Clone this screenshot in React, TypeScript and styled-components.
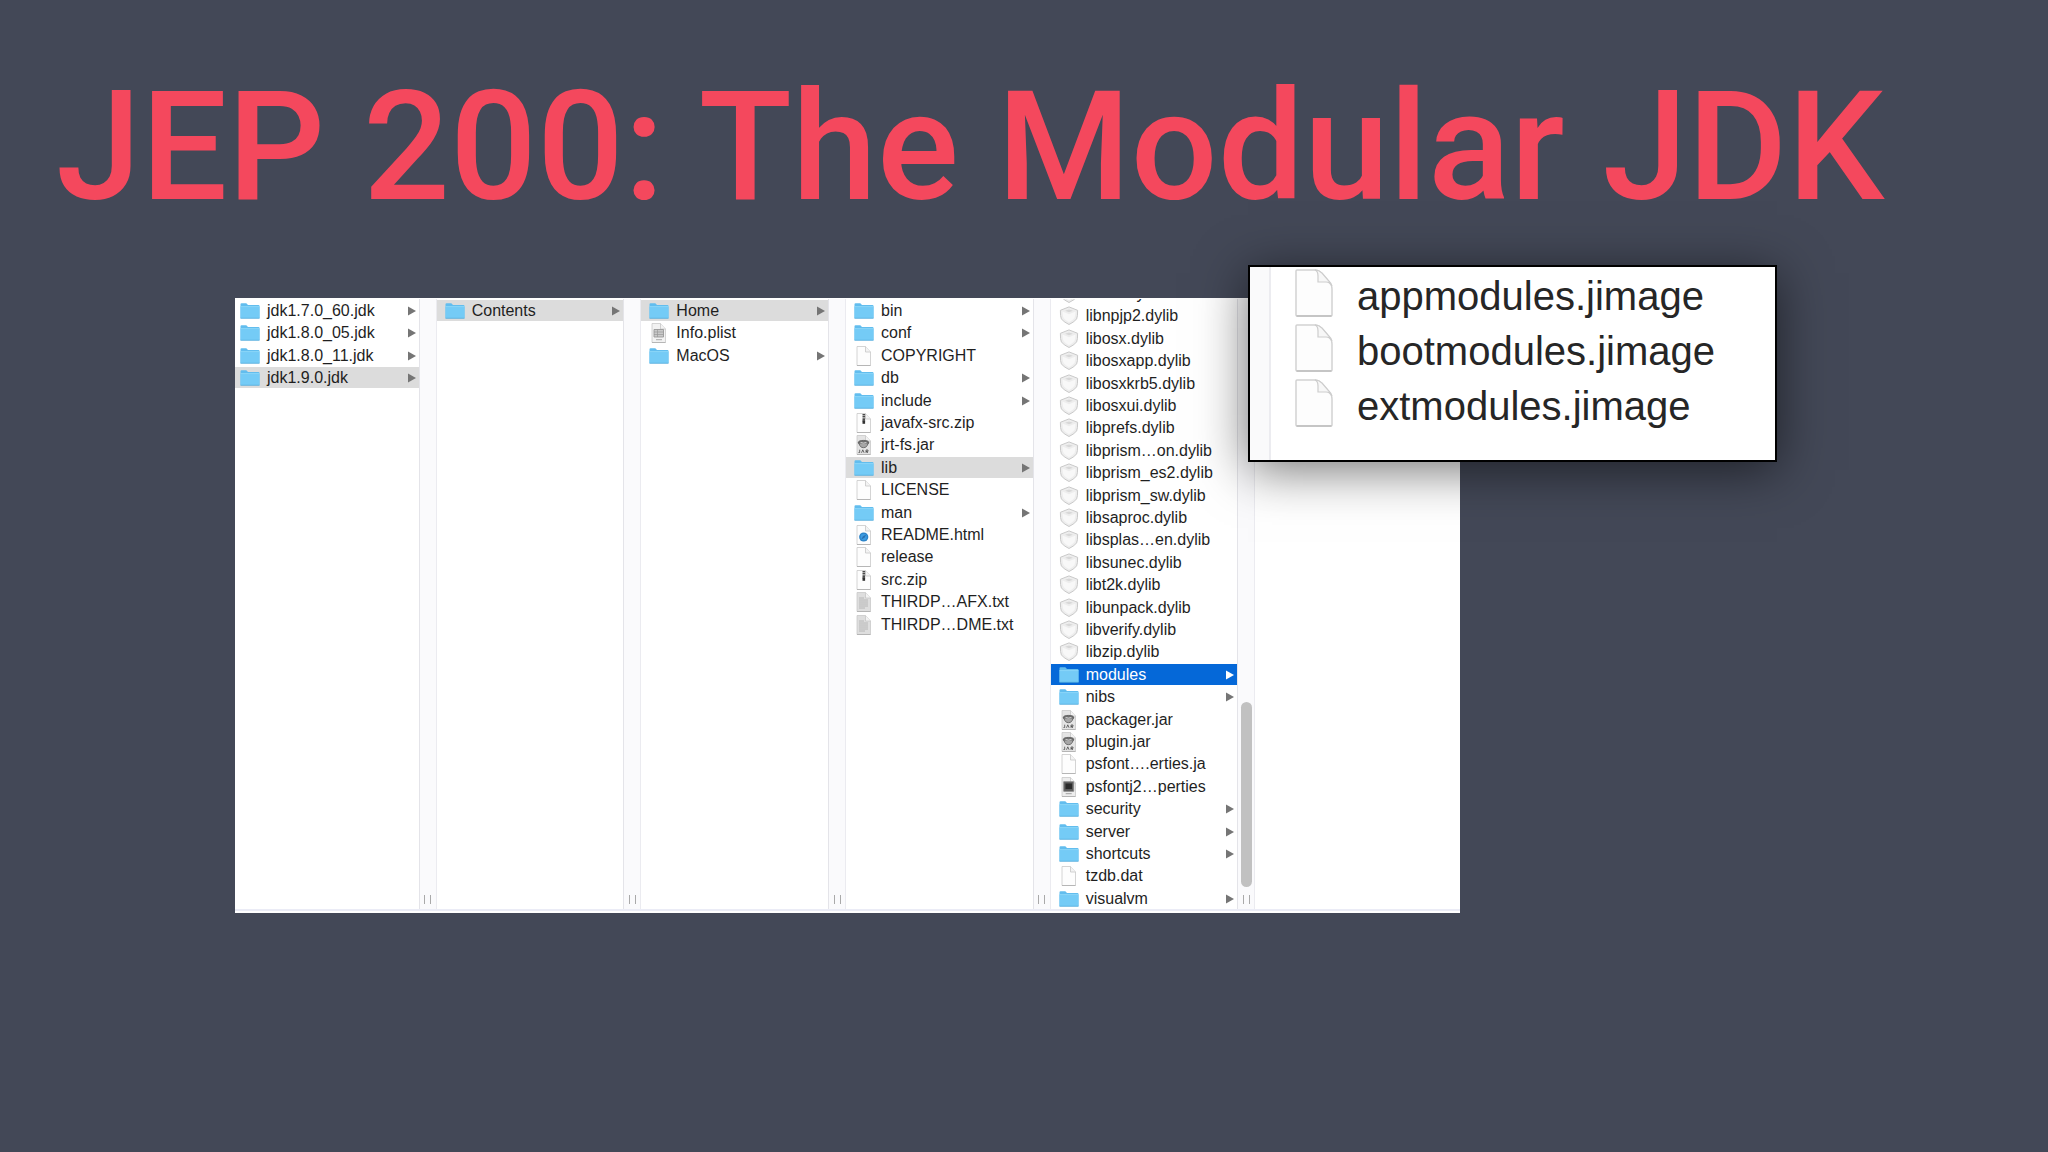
import React from "react";
import styled, { createGlobalStyle, css } from "styled-components";

type Kind = "folder" | "doc" | "plist" | "zip" | "jar" | "html" | "txt" | "lib" | "exec";
type Tone = "plain" | "path" | "active";
interface Entry {
  name: string;
  kind: Kind;
  tone?: Tone;
}

const GlobalStyle = createGlobalStyle`
  * { box-sizing: border-box; }
  body { margin: 0; background: #434857; }
`;

const sans = `"Liberation Sans", Arial, Helvetica, sans-serif`;

const Slide = styled.main`
  min-height: 100vh;
  padding: 52px 56px 64px;
  overflow: hidden;
  background: #434857;
  font-family: ${sans};
`;

const Title = styled.h1`
  margin: 0;
  color: #f4485d;
  font-family: Roboto, ${sans};
  font-size: 153px;
  font-weight: 500;
  line-height: 190px;
  white-space: nowrap;
`;

const Stage = styled.section`
  position: relative;
  max-width: 1404px;
  margin-top: 56px;
  padding-left: 179px;
`;

const Browser = styled.div`
  background: #ffffff;
  padding: 1px 0 2px;
`;

const Columns = styled.div`
  display: flex;
  height: 612px;
  border-bottom: 2px solid #ebecf6;
`;

const List = styled.ul<{ $grow: number; $inset: number; $scrolled?: boolean }>`
  flex: ${(p) => p.$grow} 1 0;
  min-width: 0;
  margin: 0;
  padding: 1px 0 0;
  list-style: none;
  display: flex;
  flex-direction: column;
  justify-content: ${(p) => (p.$scrolled ? "flex-end" : "flex-start")};
  overflow: hidden;
  --inset: ${(p) => p.$inset}px;
`;

const Item = styled.li`
  flex: none;
  height: 21px;
  margin-bottom: 1px;
  &:nth-child(5n + 2),
  &:nth-child(5n + 4) {
    margin-bottom: 2px;
  }
  &:last-child {
    margin-bottom: 0;
  }
`;

const tones = {
  plain: css`
    background: transparent;
    color: #1f1f1f;
  `,
  path: css`
    background: #dcdcdc;
    color: #1f1f1f;
  `,
  active: css`
    background: #0568d8;
    color: #ffffff;
  `,
};

const RowButton = styled.button<{ $tone: Tone }>`
  display: flex;
  align-items: center;
  gap: 7px;
  width: 100%;
  height: 21px;
  padding: 0 3px 0 var(--inset);
  border: 0;
  font: 16px/21px ${sans};
  text-align: left;
  white-space: nowrap;
  ${(p) => tones[p.$tone]}
`;

const Name = styled.span`
  flex: 1;
`;

const IconSvg = styled.svg`
  display: block;
  flex: none;
`;

const Divider = styled.div`
  flex: none;
  width: 18px;
  display: flex;
  flex-direction: column;
  justify-content: flex-end;
  align-items: center;
  gap: 8px;
  padding-bottom: 5px;
  background: #fafafc;
  border-left: 1px solid #e4e4e9;
  border-right: 1px solid #ebebf0;
`;

const Thumb = styled.div`
  width: 11px;
  height: 185px;
  border-radius: 6px;
  background: #c1c1c1;
`;

const Grip = styled.div`
  width: 7px;
  height: 9px;
  border: solid #a9a9a9;
  border-width: 0 1px;
`;

const Preview = styled.div`
  flex: 205 1 0;
`;

const Callout = styled.aside`
  position: absolute;
  top: -33px;
  left: 1192px;
  width: 529px;
  height: 197px;
  display: flex;
  border: 2px solid #000000;
  background: #ffffff;
  box-shadow: 0 8px 48px rgba(0, 0, 0, 0.55);
`;

const Gutter = styled.div`
  width: 21px;
  background: #fafafb;
  border-right: 2px solid #ececf0;
`;

const BigList = styled.ul`
  margin: 0;
  padding: 2px 0 0 24px;
  list-style: none;
  display: flex;
  flex-direction: column;
  gap: 5px;
`;

const BigRow = styled.li`
  display: flex;
  gap: 24px;
  height: 50px;
  color: #262626;
  font-size: 40px;
  line-height: 54px;
  white-space: nowrap;
`;

const Page = ({ fill = "#fdfdfd" }: { fill?: string }) => (
  <>
    <path d="M3 .5h8.500l5 5.500v13.500H3z" fill={fill} stroke="#c9c9c9" strokeWidth=".8" />
    <path d="M11.500.5v5.500h5" fill="#f3f3f3" stroke="#c6c6c6" strokeWidth=".8" />
    <path d="M3 19.600h13.500" stroke="#a9a9a9" strokeWidth=".8" />
  </>
);

const glyphs: Record<Kind, React.ReactNode> = {
  folder: (
    <>
      <path d="M.5 3.200q0-1 1-1h4.800l1.700 1.700h10.500q1 0 1 1v12.200H.5z" fill="#62bdee" />
      <path d="M.5 5.600h19v11.600H.5z" fill="#74cbf6" />
      <path d="M.5 5.600h19" stroke="#93daf9" strokeWidth=".8" />
      <path d="M.5 17.300h19" stroke="#4fa9da" strokeWidth=".8" />
    </>
  ),
  doc: <Page />,
  plist: (
    <>
      <Page fill="#f2f2f2" />
      <path d="M5 6.500h9.500v7.500H5z" fill="#c9c9c9" stroke="#989898" strokeWidth=".9" />
      <path d="M5 9h9.500M5 11.500h9.500M8.500 6.500v7.500" stroke="#989898" strokeWidth=".7" />
      <path d="M7 16.700h6" stroke="#aaaaaa" strokeWidth="1" />
    </>
  ),
  zip: (
    <>
      <Page />
      <path d="M9.800 1v7.500" stroke="#4a4a4a" strokeWidth="2.600" strokeDasharray="1.300 .4" />
      <path d="M8.500 7.500h2.600v3.300H8.500z" fill="#303030" />
    </>
  ),
  jar: (
    <>
      <Page fill="#e4e4e4" />
      <ellipse cx="9.500" cy="7.600" rx="5.200" ry="2.200" fill="#6e6e6e" stroke="#444444" strokeWidth=".7" />
      <path d="M5 8.500q1 4.200 4.500 4.200t4.500-4.200" fill="#a6a6a6" stroke="#5a5a5a" strokeWidth=".8" />
      <path d="M6.500 7.400q3 1.300 6 0" stroke="#e9e9e9" strokeWidth=".8" fill="none" />
      <path d="M5.700 14.700v2.800H4.500M7.500 17.800l1.300-3 1.300 3M12 17.800v-2.800h2v1.400h-2l2 1.400" stroke="#4d4d4d" strokeWidth=".8" fill="none" />
    </>
  ),
  html: (
    <>
      <Page />
      <circle cx="9.700" cy="12" r="4.600" fill="#2b83c8" />
      <circle cx="9.700" cy="12" r="3.200" fill="#3d9be0" />
      <path d="M12.300 9.500l-1.800 3.300-3.300 1.700 1.800-3.300z" fill="#2a6fb0" />
    </>
  ),
  txt: (
    <>
      <Page fill="#dedede" />
      <path d="M5 6h5M5 8h9M5 10h9M5 12h9M5 14h9M5 16h6" stroke="#adadad" strokeWidth=".8" />
    </>
  ),
  lib: (
    <>
      <path
        d="M10 .9l8.600 3.400q.2 6.200-1 8.600Q15.500 16 10 18.500 4.500 16 2.400 12.900 1.200 10.500 1.400 4.300z"
        fill="#ededed"
        stroke="#c9c9c9"
        strokeWidth="1"
      />
      <path d="M3.500 5.600l6.500 2.600 6.500-2.600q0 4.500-1 6.300Q13.500 14.500 10 16.300q-3.500-1.800-5.500-4.400Q3.500 10 3.500 5.600z" fill="#f8f8f8" />
      <path d="M6 4.800L10 3.600l4 1.200-4 1.500z" fill="#d8d8d8" />
    </>
  ),
  exec: (
    <>
      <Page fill="#ededed" />
      <path d="M4.700 4.700h10v9.600h-10z" fill="#5c5c5c" stroke="#858585" strokeWidth=".8" />
      <path d="M6.500 6.500h6.500V12H6.500z" fill="#2b2b2b" />
      <path d="M6.700 16.700h6" stroke="#999999" strokeWidth=".9" />
    </>
  ),
};

const Icon = ({ kind }: { kind: Kind }) => (
  <IconSvg width="20" height="20" viewBox="0 0 20 20" fill="none" aria-hidden="true">
    {glyphs[kind]}
  </IconSvg>
);

const Arrow = ({ light }: { light: boolean }) => (
  <IconSvg width="8" height="10" viewBox="0 0 8 10" aria-hidden="true">
    <path d="M0 .5v9L8 5z" fill={light ? "#ffffff" : "#757575"} />
  </IconSvg>
);

const BigPage = () => (
  <IconSvg width="38" height="48" viewBox="0 0 38 48" fill="none" aria-hidden="true">
    <path d="M1 2q0-1 1-1h18q4 0 7 4l7 8q3 3 3 7v26q0 1-1 1H2q-1 0-1-1z" fill="#fdfdfd" stroke="#d2d2d2" strokeWidth="1.500" />
    <path d="M20 1q3 1 3 6v6h8q4 0 6 4-1-3-4-6l-6-7q-3-3-7-3z" fill="#f7f7f7" stroke="#cdcdcd" strokeWidth="1.200" />
    <path d="M1.500 47h35" stroke="#bdbdbd" strokeWidth="1.500" />
  </IconSvg>
);

const f = (name: string, tone: Tone = "plain"): Entry => ({ name, kind: "folder", tone });
const e = (name: string, kind: Kind): Entry => ({ name, kind });

const jdks = [f("jdk1.7.0_60.jdk"), f("jdk1.8.0_05.jdk"), f("jdk1.8.0_11.jdk"), f("jdk1.9.0.jdk", "path")];
const bundle = [f("Contents", "path")];
const contents = [f("Home", "path"), e("Info.plist", "plist"), f("MacOS")];
const home = [
  f("bin"),
  f("conf"),
  e("COPYRIGHT", "doc"),
  f("db"),
  f("include"),
  e("javafx-src.zip", "zip"),
  e("jrt-fs.jar", "jar"),
  f("lib", "path"),
  e("LICENSE", "doc"),
  f("man"),
  e("README.html", "html"),
  e("release", "doc"),
  e("src.zip", "zip"),
  e("THIRDP…AFX.txt", "txt"),
  e("THIRDP…DME.txt", "txt"),
];
const lib = [
  ...[
    "libnio",
    "libnpjp2",
    "libosx",
    "libosxapp",
    "libosxkrb5",
    "libosxui",
    "libprefs",
    "libprism…on",
    "libprism_es2",
    "libprism_sw",
    "libsaproc",
    "libsplas…en",
    "libsunec",
    "libt2k",
    "libunpack",
    "libverify",
    "libzip",
  ].map((n) => e(`${n}.dylib`, "lib")),
  f("modules", "active"),
  f("nibs"),
  e("packager.jar", "jar"),
  e("plugin.jar", "jar"),
  e("psfont….erties.ja", "doc"),
  e("psfontj2…perties", "exec"),
  f("security"),
  f("server"),
  f("shortcuts"),
  e("tzdb.dat", "doc"),
  f("visualvm"),
];

interface ColumnProps {
  items: Entry[];
  grow?: number;
  inset?: number;
  scrolled?: boolean;
}

const Column = ({ items, grow = 187, inset = 8, scrolled }: ColumnProps) => (
  <>
    <List $grow={grow} $inset={inset} $scrolled={scrolled}>
      {items.map(({ name, kind, tone = "plain" }) => (
        <Item key={name}>
          <RowButton type="button" $tone={tone}>
            <Icon kind={kind} />
            <Name>{name}</Name>
            {kind === "folder" && <Arrow light={tone === "active"} />}
          </RowButton>
        </Item>
      ))}
    </List>
    <Divider>
      {scrolled && <Thumb />}
      <Grip />
    </Divider>
  </>
);

export default function App() {
  return (
    <>
      <GlobalStyle />
      <Slide>
        <Title>JEP 200: The Modular JDK</Title>
        <Stage>
          <Browser>
            <Columns>
              <Column items={jdks} grow={184} inset={5} />
              <Column items={bundle} />
              <Column items={contents} />
              <Column items={home} />
              <Column items={lib} scrolled />
              <Preview />
            </Columns>
          </Browser>
          <Callout>
            <Gutter />
            <BigList>
              {["appmodules.jimage", "bootmodules.jimage", "extmodules.jimage"].map((name) => (
                <BigRow key={name}>
                  <BigPage />
                  <span>{name}</span>
                </BigRow>
              ))}
            </BigList>
          </Callout>
        </Stage>
      </Slide>
    </>
  );
}
